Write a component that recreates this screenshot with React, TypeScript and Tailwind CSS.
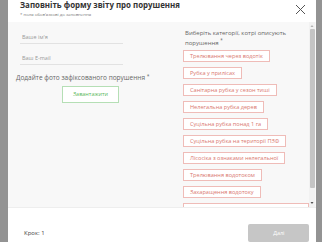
import React from "react";

const tags = [
  "Трелювання через водотік",
  "Рубка у прилісах",
  "Санітарна рубка у сезон тиші",
  "Нелегальна рубка дерев",
  "Суцільна рубка понад 1 га",
  "Суцільна рубка на території ПЗФ",
  "Лісосіка з ознаками нелегальної",
  "Трелювання водотоком",
  "Захаращення водотоку",
  "Інше порушення у лісовому господарстві",
];

export default function App() {
  return (
    <div
      className="w-[322px] h-[242px] overflow-hidden bg-[#939393] flex pl-[8px] pr-[9px]"
      style={{ fontFamily: '"Open Sans", "Noto Sans", sans-serif' }}
    >
      <div className="flex-1 bg-white flex flex-col">
        {/* header */}
        <div className="h-[22px] flex justify-between pl-[12px] pr-[10px] shrink-0">
          <div>
            <div className="text-[7.9px] leading-[10px] font-bold text-[#333]">
              Заповніть форму звіту про порушення
            </div>
            <div className="text-[4.3px] leading-[6px] text-[#777] mt-[1px]">
              * поля обов'язкові до заповнення
            </div>
          </div>
          <svg width="11" height="11" viewBox="0 0 11 11" className="mt-[4px]">
            <path d="M1 1L10 10M10 1L1 10" stroke="#555" strokeWidth="1" />
          </svg>
        </div>
        {/* body */}
        <div className="h-[185px] bg-[#f8f8f8] flex shrink-0 overflow-hidden">
          <div className="flex-1 flex">
            <div className="w-[175px] pl-[8px] pt-[12px]">
              <div className="ml-[4px] w-[103px] border-b border-[#e2e2e2] pl-[2px] pb-[2px] text-[5.5px] leading-[7px] text-[#999]">
                Ваше ім'я
              </div>
              <div className="ml-[4px] mt-[11px] w-[103px] border-b border-[#e2e2e2] pl-[2px] pb-[2px] text-[5.5px] leading-[7px] text-[#999]">
                Ваш E-mail
              </div>
              <div className="mt-[9px] text-[6.5px] leading-[8px] text-[#666]">
                Додайте фото зафіксованого порушення{" "}
                <span className="align-top text-[5px] leading-none">*</span>
              </div>
              <div className="mt-[4px] ml-[46px] w-[57px] h-[17px] border border-[#b5dfb5] bg-white flex items-center justify-center text-[5.5px] text-[#5cb85c]">
                Завантажити
              </div>
            </div>
            <div className="flex-1 pt-[6px]">
              <div className="pl-[2px] text-[6px] leading-[10px] text-[#666] w-[112px]">
                Виберіть категорії, котрі описують порушення{" "}
                <span className="align-top text-[4.5px] leading-none">*</span>
              </div>
              <div className="mt-[2px] flex flex-col items-start gap-[5px]">
                {tags.map((t) => (
                  <div
                    key={t}
                    className="h-[12px] px-[6px] border border-[#efbcb8] bg-white flex items-center text-[5.6px] leading-[7px] text-[#d9786f] whitespace-nowrap"
                  >
                    {t}
                  </div>
                ))}
              </div>
            </div>
          </div>
          {/* scrollbar */}
          <div className="w-[6px] mr-[1px] flex flex-col items-center bg-[#f2f2f2]">
            <svg width="4" height="4" viewBox="0 0 4 4" className="mt-[2px]">
              <path d="M0.5 3L2 1L3.5 3Z" fill="#b0b0b0" />
            </svg>
            <div className="mt-[1px] w-[5px] h-[159px] bg-[#c4c4c4] rounded-[1px]" />
            <div className="flex-1" />
            <svg width="4" height="4" viewBox="0 0 4 4" className="mb-[2px]">
              <path d="M0.5 1L2 3L3.5 1Z" fill="#505050" />
            </svg>
          </div>
        </div>
        {/* footer */}
        <div className="flex-1 flex items-start justify-between pl-[16px] pr-[7px] pt-[16px] border-t border-[#eeeeee]">
          <div className="mt-[5px] text-[6px] leading-[8px] text-[#444]">Крок: 1</div>
          <div className="w-[61px] h-[18px] rounded-[2px] bg-[#c6c6c6] flex items-center justify-center text-[5.5px] text-white">
            Далі
          </div>
        </div>
      </div>
    </div>
  );
}
